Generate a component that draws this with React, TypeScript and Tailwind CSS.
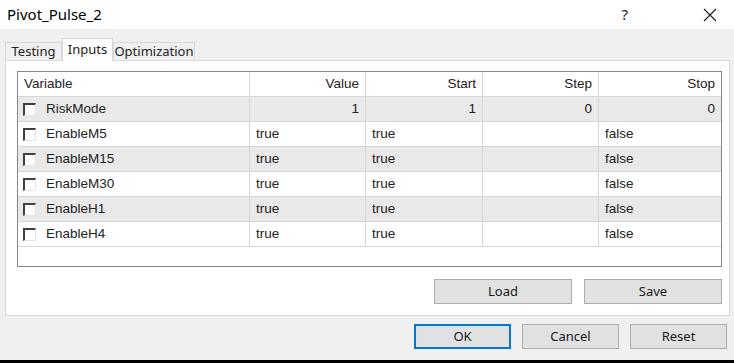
import React from 'react';

type Row = { name: string; value: string; start: string; step: string; stop: string; num: boolean };

const rows: Row[] = [
  { name: 'RiskMode', value: '1', start: '1', step: '0', stop: '0', num: true },
  { name: 'EnableM5', value: 'true', start: 'true', step: '', stop: 'false', num: false },
  { name: 'EnableM15', value: 'true', start: 'true', step: '', stop: 'false', num: false },
  { name: 'EnableM30', value: 'true', start: 'true', step: '', stop: 'false', num: false },
  { name: 'EnableH1', value: 'true', start: 'true', step: '', stop: 'false', num: false },
  { name: 'EnableH4', value: 'true', start: 'true', step: '', stop: 'false', num: false },
];

function Checkbox() {
  return (
    <span className="w-[13px] h-[13px] bg-white border-t-2 border-l-2 border-t-[#404040] border-l-[#404040] border-r border-b border-r-[#e3e3e3] border-b-[#e3e3e3] shrink-0" />
  );
}

function Btn({ label, w, primary }: { label: string; w: string; primary?: boolean }) {
  return (
    <button
      className={`${w} h-[25px] bg-[#e1e1e1] text-[13px] text-[#1a1a1a] flex items-center justify-center ${
        primary ? 'border-2 border-[#0078d7]' : 'border border-[#adadad]'
      }`}
    >
      {label}
    </button>
  );
}

export default function App() {
  const cell = 'h-[25px] flex items-center px-[6px] border-r border-b border-[#d6d6d6]';
  return (
    <div className="w-[734px] h-[363px] flex flex-col bg-[#f0f0f0] font-['Liberation_Sans',sans-serif] text-[13.5px] text-[#222] overflow-hidden">
      <div className="h-[29px] bg-white flex items-center shrink-0">
        <span className="pl-[7px] text-[15px] font-['Noto_Sans',sans-serif] text-black">Pivot_Pulse_2</span>
        <span className="ml-auto mr-[75px] text-[15px] font-['Noto_Sans',sans-serif]">?</span>
        <svg width="14" height="14" viewBox="0 0 14 14" className="mr-[17px]">
          <path d="M1 1 L13 13 M13 1 L1 13" stroke="#222" strokeWidth="1.2" />
        </svg>
      </div>

      <div className="flex-1 flex flex-col pl-[5px]">
        <div className="flex items-end h-[31px] font-['Noto_Sans',sans-serif] text-[13px]">
          <div className="w-[57px] h-[18px] border border-b-0 border-[#d9d9d9] flex items-center justify-center">Testing</div>
          <div className="w-[51px] h-[23px] bg-white border border-b-0 border-[#d9d9d9] flex items-start justify-center pt-[1px] -mb-[1px] z-10">Inputs</div>
          <div className="w-[82px] h-[18px] border border-b-0 border-[#d9d9d9] flex items-center justify-center">Optimization</div>
        </div>
        <div className="w-[725px] h-[256px] bg-white border border-[#d9d9d9] pt-[10px] pl-[11px] flex flex-col">
          <div className="w-[705px] h-[196px] border border-[#828790] bg-white">
            <div className="grid grid-cols-[232px_116px_117px_116px_122px]">
              <div className={cell}>Variable</div>
              <div className={`${cell} justify-end`}>Value</div>
              <div className={`${cell} justify-end`}>Start</div>
              <div className={`${cell} justify-end`}>Step</div>
              <div className={`${cell} justify-end border-r-0`}>Stop</div>
              {rows.map((r, i) => {
                const bg = i % 2 === 0 ? 'bg-[#e9e9e9]' : 'bg-white';
                const al = r.num ? 'justify-end' : '';
                return (
                  <React.Fragment key={r.name}>
                    <div className={`${cell} ${bg} gap-[10px] pl-[5px]`}>
                      <Checkbox />
                      <span>{r.name}</span>
                    </div>
                    <div className={`${cell} ${bg} ${al}`}>{r.value}</div>
                    <div className={`${cell} ${bg} ${al}`}>{r.start}</div>
                    <div className={`${cell} ${bg} ${al}`}>{r.step}</div>
                    <div className={`${cell} ${bg} ${al} border-r-0`}>{r.stop}</div>
                  </React.Fragment>
                );
              })}
            </div>
          </div>
          <div className="flex justify-end gap-[12px] mt-[12px] w-[705px] font-['Noto_Sans',sans-serif]">
            <Btn label="Load" w="w-[138px]" />
            <Btn label="Save" w="w-[138px]" />
          </div>
        </div>
        <div className="flex justify-end gap-[11px] mt-[8px] pr-[7px] font-['Noto_Sans',sans-serif]">
          <Btn label="OK" w="w-[97px]" primary />
          <Btn label="Cancel" w="w-[97px]" />
          <Btn label="Reset" w="w-[97px]" />
        </div>
      </div>
      <div className="h-[3px] bg-black shrink-0" />
    </div>
  );
}
